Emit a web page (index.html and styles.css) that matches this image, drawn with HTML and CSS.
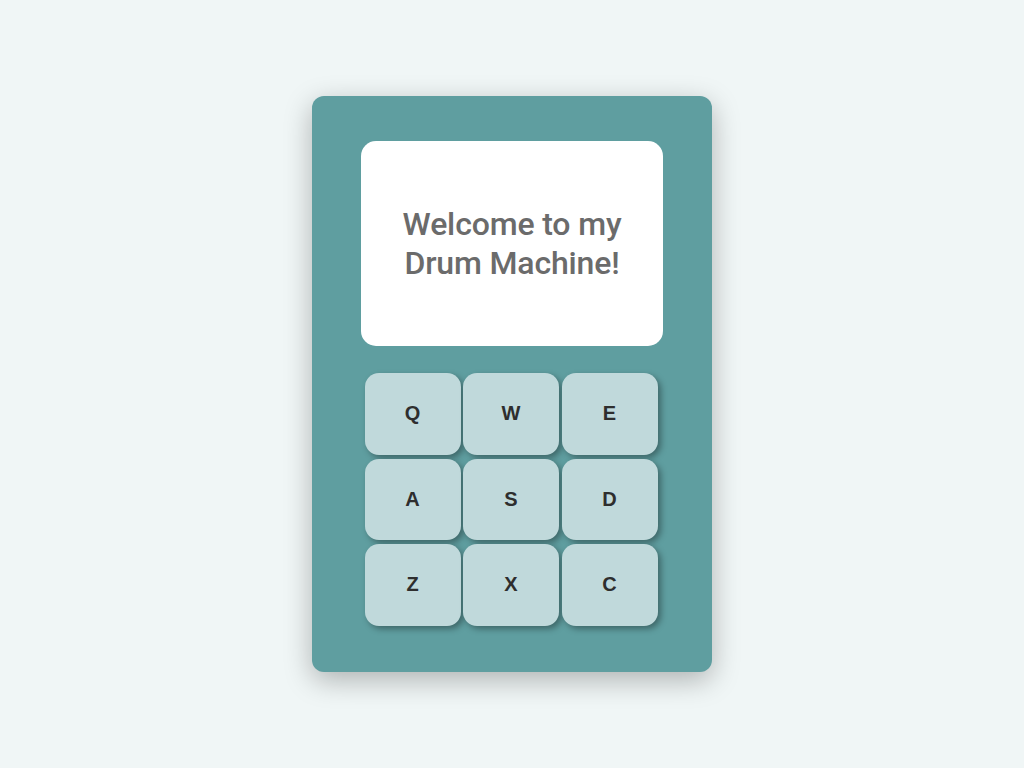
FILE: index.html
```html
<!DOCTYPE html>
<html lang="en">
<head>
<meta charset="utf-8">
<title>Drum Machine</title>
<link rel="stylesheet" href="styles.css">
</head>
<body>
<main class="page">
  <div id="drum-machine" class="machine">
    <div id="display" class="display">Welcome to my<br>Drum Machine!</div>
    <div class="pads">
      <button class="drum-pad">Q</button>
      <button class="drum-pad">W</button>
      <button class="drum-pad">E</button>
      <button class="drum-pad">A</button>
      <button class="drum-pad">S</button>
      <button class="drum-pad">D</button>
      <button class="drum-pad">Z</button>
      <button class="drum-pad">X</button>
      <button class="drum-pad">C</button>
    </div>
  </div>
</main>
</body>
</html>
```
FILE: styles.css
```css
html, body {
  margin: 0;
  padding: 0;
  height: 100%;
}
body {
  background: #f0f6f6;
  font-family: Roboto, "Liberation Sans", sans-serif;
}
.page {
  display: flex;
  justify-content: center;
  padding-top: 96px;
}
.machine {
  width: 400px;
  height: 576px;
  box-sizing: border-box;
  background: #5f9ea0;
  border-radius: 12px;
  box-shadow: 0 8px 28px rgba(0, 0, 0, 0.28);
  padding: 45px 49px 0;
  display: flex;
  flex-direction: column;
  align-items: center;
}
.display {
  width: 302px;
  height: 205px;
  background: #ffffff;
  border-radius: 15px;
  display: flex;
  align-items: center;
  justify-content: center;
  text-align: center;
  font-family: Roboto, sans-serif;
  font-weight: 500;
  font-size: 32px;
  line-height: 39px;
  color: #6b6b6b;
  letter-spacing: -0.15px;
}
.pads {
  margin-top: 27px;
  margin-left: -2px;
  display: grid;
  grid-template-columns: repeat(3, 96px);
  grid-auto-rows: 81.5px;
  column-gap: 2.5px;
  row-gap: 4px;
}
.drum-pad {
  border: none;
  margin: 0;
  padding: 0;
  background: #c0d9db;
  border-radius: 14px;
  font-family: "Liberation Sans", Arial, sans-serif;
  font-weight: bold;
  font-size: 20px;
  color: #2e2e2e;
  box-shadow: 3px 3px 6px rgba(0, 0, 0, 0.35);
  cursor: pointer;
}
```
